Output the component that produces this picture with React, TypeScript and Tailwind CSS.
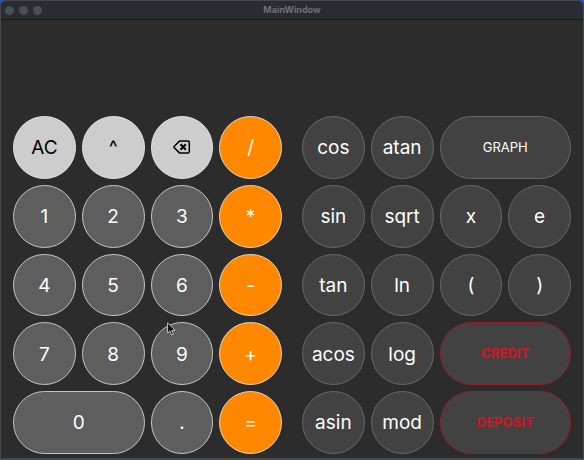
import type { ReactNode } from "react";

type Tone = "light" | "digit" | "operator" | "science" | "alert";

type Key = {
  label: string;
  tone: Tone;
  wide?: boolean;
  small?: boolean;
  icon?: ReactNode;
};

const tones: Record<Tone, string> = {
  light: "border-[#e2e2e2] bg-[#cdcdcd] text-black",
  digit: "border-[#c4c4c4] bg-[#5e5e5e] text-white",
  operator: "border-[#e6d4bc] bg-[#ff8800] text-white",
  science: "border-[#686868] bg-[#424242] text-white",
  alert: "border-[#962028] bg-[#424242] text-[#c51b26] font-extrabold",
};

const mainKeys: Key[] = [
  { label: "AC", tone: "light" },
  { label: "^", tone: "light" },
  {
    label: "Backspace",
    tone: "light",
    icon: (
      <svg viewBox="0 0 18 16" className="h-4 w-[18px]" fill="none" stroke="currentColor" strokeWidth="1.5" strokeLinejoin="round" aria-hidden="true">
        <path d="M6.7 1.900h8.200a1.400 1.400 0 0 1 1.400 1.400v9.400a1.400 1.400 0 0 1-1.400 1.400H6.700L1.300 8.800a1.100 1.100 0 0 1 0-1.500z" />
        <path d="M7.500 5.300l5.300 5.400M12.800 5.300l-5.300 5.400" strokeWidth="2" />
      </svg>
    ),
  },
  { label: "/", tone: "operator" },
  { label: "1", tone: "digit" },
  { label: "2", tone: "digit" },
  { label: "3", tone: "digit" },
  { label: "*", tone: "operator" },
  { label: "4", tone: "digit" },
  { label: "5", tone: "digit" },
  { label: "6", tone: "digit" },
  { label: "-", tone: "operator" },
  { label: "7", tone: "digit" },
  { label: "8", tone: "digit" },
  { label: "9", tone: "digit" },
  { label: "+", tone: "operator" },
  { label: "0", tone: "digit", wide: true },
  { label: ".", tone: "digit" },
  { label: "=", tone: "operator" },
];

const scienceKeys: Key[] = [
  { label: "cos", tone: "science" },
  { label: "atan", tone: "science" },
  { label: "GRAPH", tone: "science", wide: true, small: true },
  { label: "sin", tone: "science" },
  { label: "sqrt", tone: "science" },
  { label: "x", tone: "science" },
  { label: "e", tone: "science" },
  { label: "tan", tone: "science" },
  { label: "ln", tone: "science" },
  { label: "(", tone: "science" },
  { label: ")", tone: "science" },
  { label: "acos", tone: "science" },
  { label: "log", tone: "science" },
  { label: "CREDIT", tone: "alert", wide: true, small: true },
  { label: "asin", tone: "science" },
  { label: "mod", tone: "science" },
  { label: "DEPOSIT", tone: "alert", wide: true, small: true },
];

function KeyButton({ label, tone, wide, small, icon }: Key) {
  return (
    <button
      type="button"
      aria-label={icon ? label : undefined}
      className={`flex items-center justify-center rounded-full border ${tones[tone]} ${
        wide ? "col-span-2" : ""
      } ${small ? "text-[13px]" : icon ? "" : "pt-0.5 text-[19px]"}`}
    >
      {icon ?? label}
    </button>
  );
}

function Keypad({ keys, name }: { keys: Key[]; name: string }) {
  return (
    <div role="group" aria-label={name} className="grid flex-1 grid-cols-4 grid-rows-5 gap-1.5">
      {keys.map((key) => (
        <KeyButton key={key.label} {...key} />
      ))}
    </div>
  );
}

export default function App() {
  return (
    <div className="relative min-h-screen bg-[#2457b8] font-['Inter','Liberation_Sans',sans-serif]">
      <main className="flex min-h-screen flex-col overflow-hidden rounded-t-md border border-b-2 border-[#464849] bg-[#2c2c2c]">
        <header className="grid h-[19px] grid-cols-[1fr_auto_1fr] items-center border-b border-[#1b1c1e] bg-[#292c33] px-1">
          <div className="flex gap-[5px]">
            <span className="size-[9px] rounded-full bg-[#4c4e53]" />
            <span className="size-[9px] rounded-full bg-[#4c4e53]" />
            <span className="size-[9px] rounded-full bg-[#4c4e53]" />
          </div>
          <h1 className="text-[9px] font-bold text-[#6f7175]">MainWindow</h1>
        </header>
        <output aria-label="Result" className="block h-24" />
        <div className="flex flex-1 gap-5 px-3 pb-1">
          <Keypad keys={mainKeys} name="Number keys" />
          <Keypad keys={scienceKeys} name="Function keys" />
        </div>
      </main>
      <svg viewBox="0 0 9 14" className="pointer-events-none absolute top-[322px] left-[167px] h-3.5 w-[9px]" aria-hidden="true">
        <path d="M.6.9v10.200l2.300-2.200 1.700 4 1.800-.8-1.700-3.800h3.400z" fill="#0c0c0c" stroke="#e6e6e6" strokeWidth=".8" />
      </svg>
    </div>
  );
}
